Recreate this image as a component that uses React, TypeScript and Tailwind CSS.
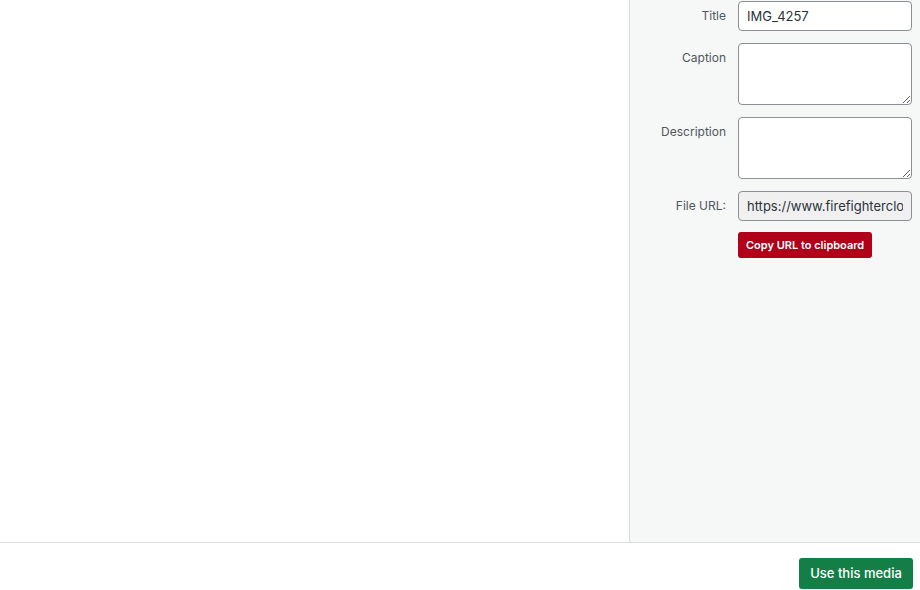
import React from 'react';

const font = { fontFamily: 'Inter, "Liberation Sans", sans-serif' };

function Field({ label, children }: { label: string; children: React.ReactNode }) {
  return (
    <div className="grid grid-cols-[96px_174px] gap-x-3 items-start">
      <label className="text-right text-[12px] leading-4 text-[#50575e] pt-[7px]">{label}</label>
      {children}
    </div>
  );
}

export default function App() {
  return (
    <div className="w-[920px] h-[590px] bg-white flex flex-col overflow-hidden" style={font}>
      <div className="flex h-[543px] border-b border-[#dcdcde]">
        <div className="flex-1" />
        <aside className="w-[291px] bg-[#f6f7f7] border-l border-[#dcdcde] pt-[1px] pr-2 flex flex-col gap-3">
          <Field label="Title">
            <input
              defaultValue="IMG_4257"
              className="h-[30px] w-full rounded border border-[#8c8f94] bg-white px-2 text-[13px] text-[#2c3338] outline-none"
            />
          </Field>
          <Field label="Caption">
            <textarea className="h-[62px] w-full rounded border border-[#8c8f94] bg-white px-2 text-[13px] outline-none block" />
          </Field>
          <Field label="Description">
            <textarea className="h-[62px] w-full rounded border border-[#8c8f94] bg-white px-2 text-[13px] outline-none block" />
          </Field>
          <div className="flex flex-col gap-[10px]">
            <Field label="File URL:">
              <input
                readOnly
                defaultValue="https://www.firefightercloset.com/wp-content/uploads/IMG_4257.jpg"
                className="h-[30px] w-full rounded border border-[#8c8f94] bg-[#f0f0f1] px-2 text-[13px] text-[#2c3338] outline-none"
              />
            </Field>
            <div className="pl-[108px]">
              <button className="h-[26px] px-2 rounded-[3px] bg-[#b0001a] text-white text-[11px] font-semibold">
                Copy URL to clipboard
              </button>
            </div>
          </div>
        </aside>
      </div>
      <div className="flex-1 flex items-start justify-end pt-[15px] pr-[7px]">
        <button className="h-[31px] w-[114px] rounded-[3px] bg-[#137f47] text-white text-[13px] font-medium">
          Use this media
        </button>
      </div>
    </div>
  );
}
